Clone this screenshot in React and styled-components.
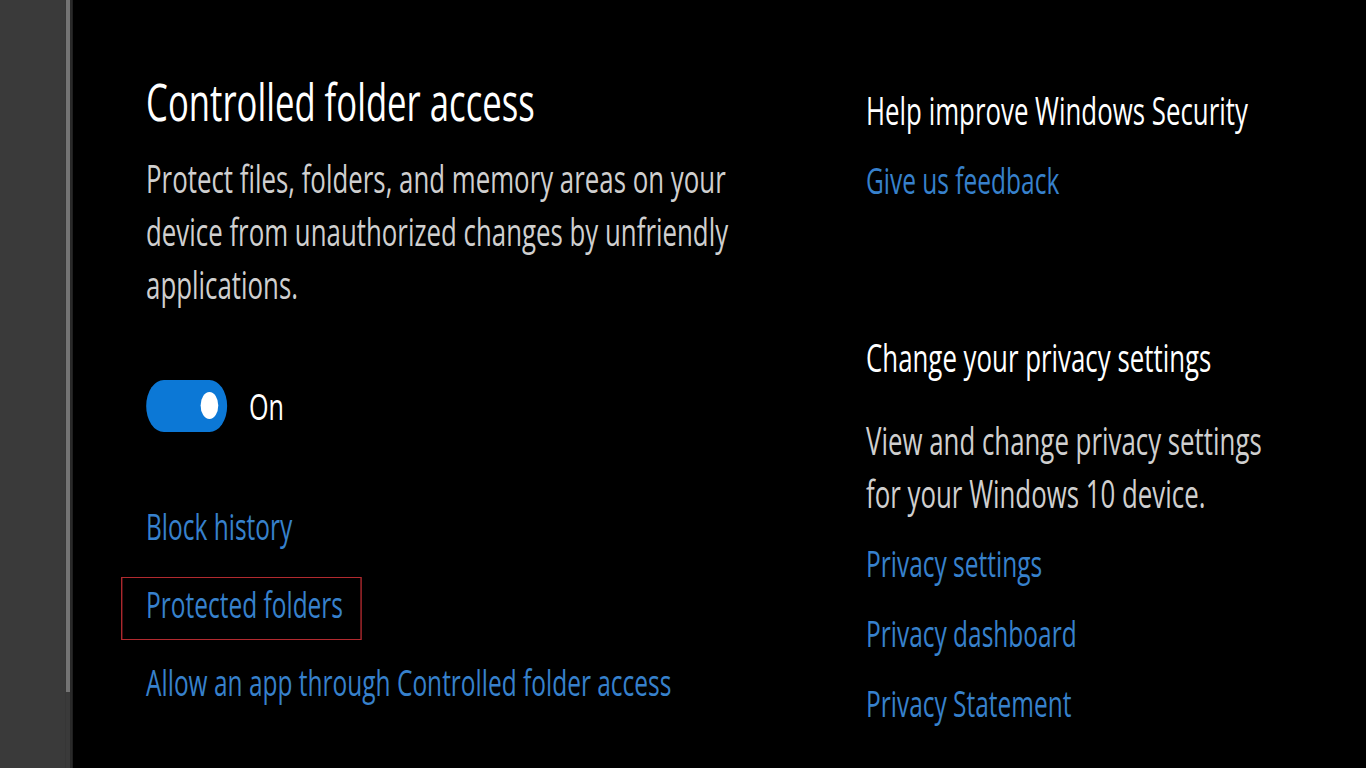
import React from 'react';
import styled, { createGlobalStyle } from 'styled-components';

// the reference is a screenshot squeezed sideways, so the whole stage is laid
// out wide and scaled on x only
const S = 0.68;
const u = (px) => `${(px / S).toFixed(1)}px`;

const COLORS = {
  page: '#000000',
  sidebar: '#3a3a3a',
  thumb: '#747474',
  divider: '#2a2a2a',
  heading: '#ffffff',
  body: '#cfcfcf',
  link: '#3781cc',
  accent: '#0c78d6',
  annotation: '#b22a2f',
};

const FONT = `"Segoe UI", "Open Sans", "Noto Sans", sans-serif`;

const GlobalStyle = createGlobalStyle`
  html, body {
    margin: 0;
    padding: 0;
    background: ${COLORS.page};
    overflow: hidden;
  }
`

const Viewport = styled.div`
  width: 1366px;
  height: 768px;
  overflow: hidden;
  background: ${COLORS.page};
`

const Stage = styled.div`
  display: flex;
  width: ${u(1366)};
  height: 768px;
  transform: scaleX(${S});
  transform-origin: 0 0;
  font-family: ${FONT};
  font-weight: 400;
`

const Sidebar = styled.aside`
  width: ${u(66)};
  background: ${COLORS.sidebar};
  flex-shrink: 0;
`

const ScrollTrack = styled.div`
  width: ${u(4)};
  background: ${COLORS.sidebar};
  flex-shrink: 0;
`

const Thumb = styled.div`
  height: 692px;
  background: ${COLORS.thumb};
`

const Divider = styled.div`
  width: ${u(3)};
  background: ${COLORS.divider};
  flex-shrink: 0;
`

const Main = styled.main`
  flex: 1;
  display: grid;
  grid-template-columns: ${u(720)} ${u(440)};
  align-items: start;
  padding-left: ${u(146 - 73)};
`

const Column = styled.section`
  display: flex;
  flex-direction: column;
  align-items: flex-start;
  padding-top: ${p => p.$top}px;
`

const Title = styled.h1`
  margin: 0;
  font-size: 51px;
  line-height: 60px;
  font-weight: 400;
  color: ${COLORS.heading};
  white-space: nowrap;
`

const Subtitle = styled.h2`
  margin: ${p => p.$before || 0}px 0 ${p => p.$after || 0}px;
  font-size: 38px;
  line-height: 53px;
  font-weight: 400;
  color: ${COLORS.heading};
  white-space: nowrap;
`

const Text = styled.p`
  margin: ${p => p.$before}px 0 0;
  max-width: ${p => u(p.$width)};
  font-size: 38px;
  line-height: 53px;
  color: ${COLORS.body};
`

const ToggleRow = styled.div`
  display: flex;
  align-items: center;
  gap: ${u(22)};
  margin-top: 68px;
`

const Switch = styled.button`
  width: ${u(81)};
  height: 52px;
  border: none;
  border-radius: 26px;
  background: ${COLORS.accent};
  padding: 0 13px;
  display: flex;
  align-items: center;
  justify-content: ${p => (p.$on ? 'flex-end' : 'flex-start')};
  cursor: pointer;
`

const Knob = styled.span`
  width: 26px;
  height: 27px;
  border-radius: 50%;
  background: #ffffff;
`

const ToggleLabel = styled.span`
  font-size: 37px;
  line-height: 53px;
  color: ${COLORS.heading};
`

const LinkList = styled.nav`
  display: flex;
  flex-direction: column;
  align-items: flex-start;
  gap: ${p => p.$gap}px;
  margin-top: ${p => p.$before}px;
`

const Link = styled.a`
  position: relative;
  font-size: 36px;
  line-height: 53px;
  color: ${COLORS.link};
  text-decoration: none;
  white-space: nowrap;
  cursor: pointer;

  ${p => p.$marked && `
    &::after {
      content: '';
      position: absolute;
      left: ${u(-25)};
      right: ${u(-19)};
      top: -1px;
      bottom: -9px;
      border: solid ${COLORS.annotation};
      border-width: 1.5px ${(1.5 / S).toFixed(1)}px;
    }
  `}
`

const App = () => (
  <>
    <GlobalStyle />
    <Viewport>
      <Stage>
        <Sidebar />
        <ScrollTrack>
          <Thumb />
        </ScrollTrack>
        <Divider />

        <Main>
          <Column $top={71}>
            <Title>Controlled folder access</Title>
            <Text $before={21} $width={620}>
              Protect files, folders, and memory areas on your device from
              unauthorized changes by unfriendly applications.
            </Text>

            <ToggleRow>
              <Switch $on aria-pressed="true" aria-label="Controlled folder access">
                <Knob />
              </Switch>
              <ToggleLabel>On</ToggleLabel>
            </ToggleRow>

            <LinkList $before={68} $gap={25}>
              <Link>Block history</Link>
              <Link $marked>Protected folders</Link>
              <Link>Allow an app through Controlled folder access</Link>
            </LinkList>
          </Column>

          <Column $top={84}>
            <Subtitle $after={17}>Help improve Windows Security</Subtitle>
            <Link>Give us feedback</Link>

            <Subtitle $before={124}>Change your privacy settings</Subtitle>
            <Text $before={30} $width={425}>
              View and change privacy settings for your Windows 10 device.
            </Text>
            <LinkList $before={17} $gap={17}>
              <Link>Privacy settings</Link>
              <Link>Privacy dashboard</Link>
              <Link>Privacy Statement</Link>
            </LinkList>
          </Column>
        </Main>
      </Stage>
    </Viewport>
  </>
);

export default App;
